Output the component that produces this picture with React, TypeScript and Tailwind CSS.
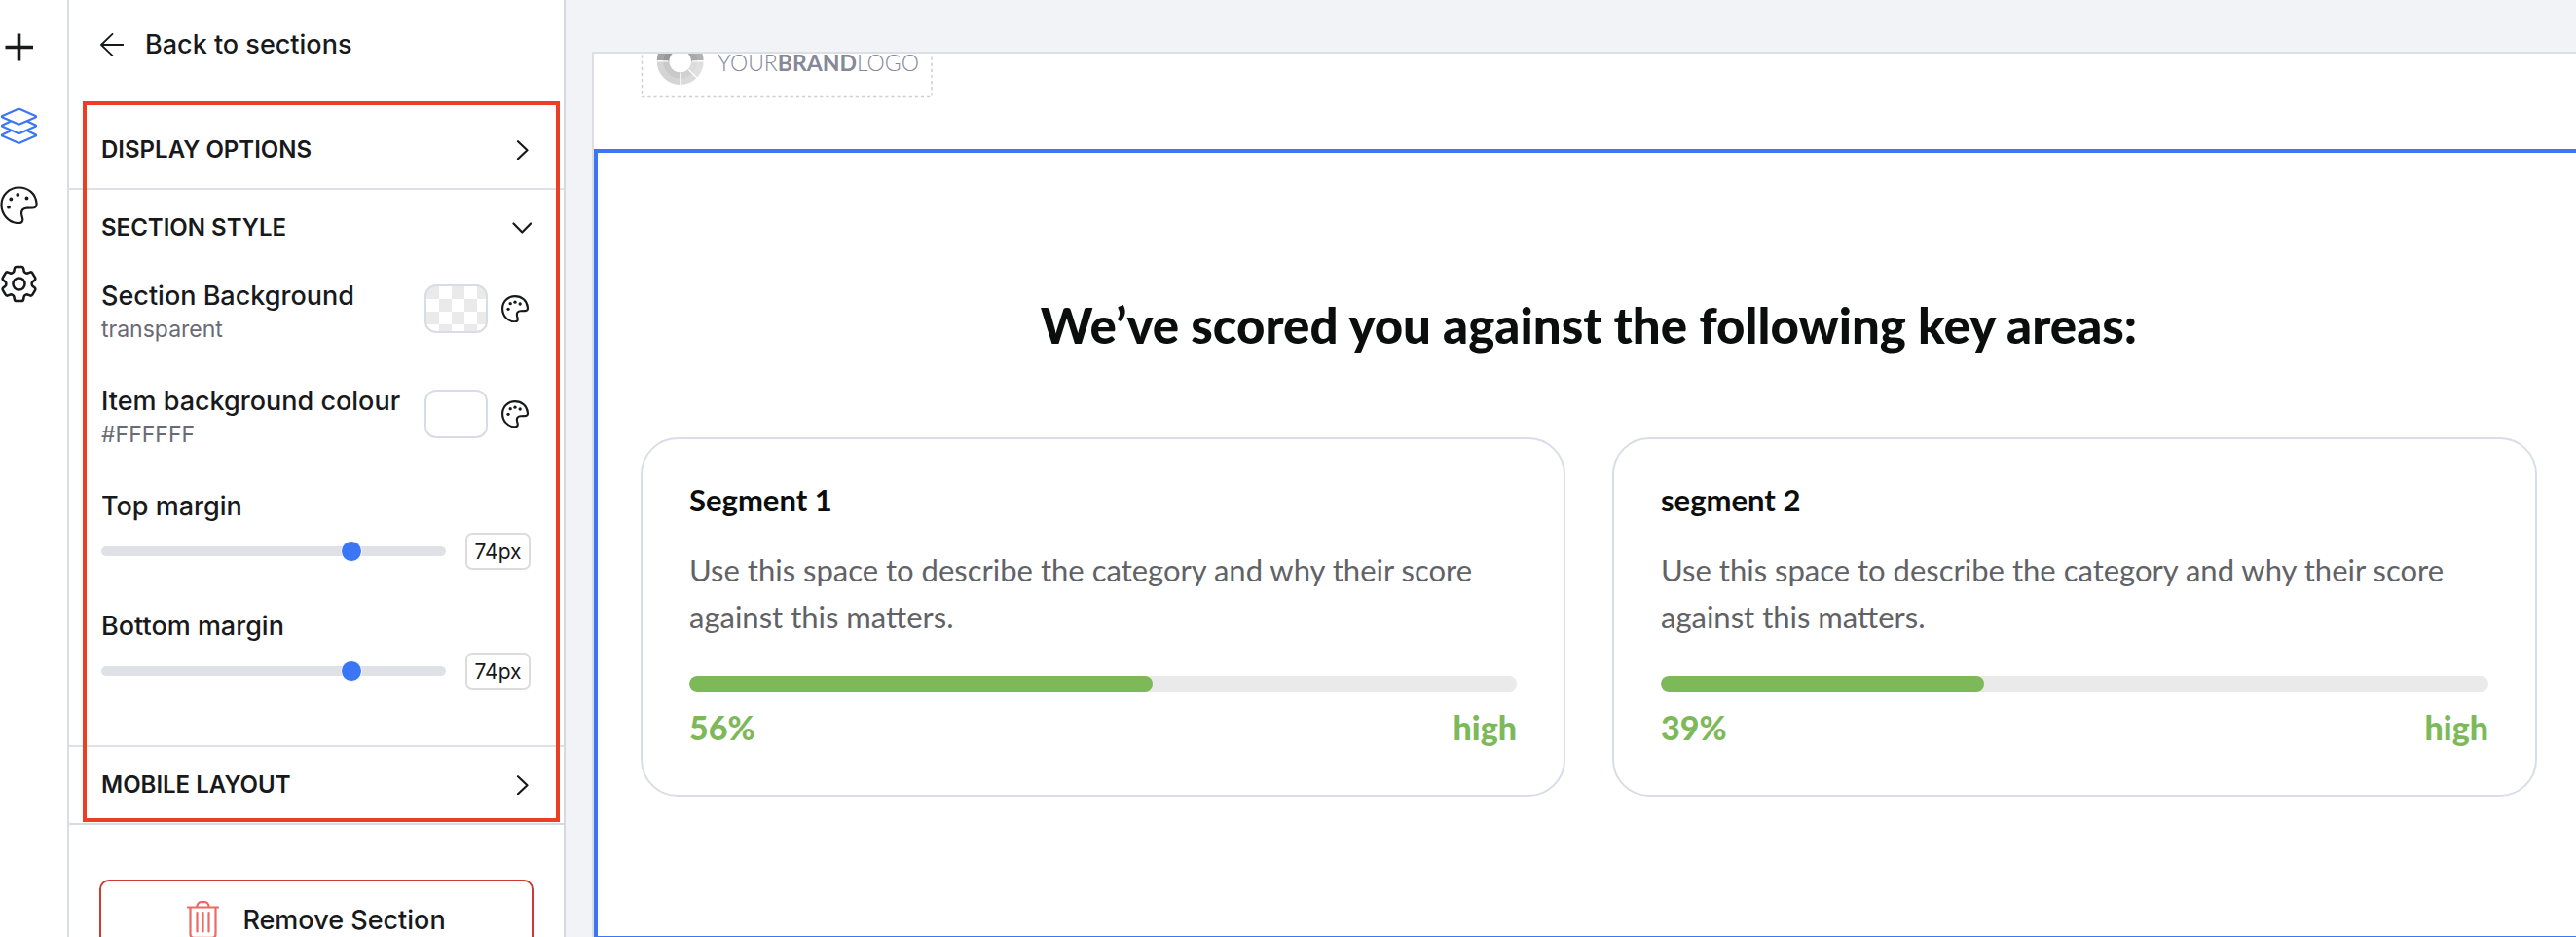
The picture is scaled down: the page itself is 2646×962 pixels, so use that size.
import React, { useState } from "react";

const COG_PATH =
  "M9.594 3.94c.09-.542.56-.94 1.11-.94h2.593c.55 0 1.02.398 1.11.94l.213 1.281c.063.374.313.686.645.87.074.04.147.083.22.127.325.196.72.257 1.075.124l1.217-.456a1.125 1.125 0 0 1 1.37.49l1.296 2.247a1.125 1.125 0 0 1-.26 1.431l-1.003.827c-.293.241-.438.613-.43.992a7.723 7.723 0 0 1 0 .255c-.008.378.137.75.43.991l1.004.827c.424.35.534.955.26 1.43l-1.298 2.247a1.125 1.125 0 0 1-1.369.491l-1.217-.456c-.355-.133-.75-.072-1.076.124a6.47 6.47 0 0 1-.22.128c-.331.183-.581.495-.644.869l-.213 1.281c-.09.543-.56.94-1.11.94h-2.594c-.55 0-1.019-.398-1.11-.94l-.213-1.281c-.062-.374-.312-.686-.644-.87a6.52 6.52 0 0 1-.22-.127c-.325-.196-.72-.257-1.076-.124l-1.217.456a1.125 1.125 0 0 1-1.369-.49l-1.297-2.247a1.125 1.125 0 0 1 .26-1.431l1.004-.827c.292-.24.437-.613.43-.991a6.932 6.932 0 0 1 0-.255c.007-.38-.138-.751-.43-.992l-1.004-.827a1.125 1.125 0 0 1-.26-1.43l1.297-2.247a1.125 1.125 0 0 1 1.37-.491l1.216.456c.356.133.751.072 1.076-.124.072-.044.146-.086.22-.128.332-.183.582-.495.644-.869l.214-1.28Z";

function PlusIcon() {
  return (
    <svg viewBox="0 0 39 39" className="size-[39px]" fill="none" stroke="currentColor" strokeWidth="3.6">
      <path d="M19.5 5.5v28M5.5 19.5h28.5" />
    </svg>
  );
}

function LayersIcon() {
  return (
    <svg viewBox="0 0 39 39" className="size-[39px]" fill="none" stroke="currentColor" strokeWidth="2.2" strokeLinejoin="round" strokeLinecap="round">
      <path d="M18.4 2.1q1.1-.5 2.2 0L36.5 9q1.2.7 0 1.4L20.6 17.3q-1.1.5-2.2 0L2.5 10.4q-1.2-.7 0-1.4z" />
      <path d="M10.5 14.7L2.5 18.4q-1.2.7 0 1.4l15.900 6.900q1.100.5 2.200 0l15.900-6.900q1.200-.7 0-1.400l-8-3.700" />
      <path d="M10.5 24.500L2.500 28.200q-1.200.7 0 1.400l15.900 6.900q1.100.5 2.200 0l15.900-6.900q1.200-.7 0-1.400l-8-3.700" />
    </svg>
  );
}

function PaletteIcon({ small = false }: { small?: boolean }) {
  const dots = small
    ? [[12.8, 12.1], [19.5, 10], [26.7, 12.5], [9.8, 20]]
    : [[11.3, 13.5], [18.3, 9], [27.5, 12.5], [9, 21.7]];
  return (
    <svg viewBox="0 0 39 39" className={small ? "size-[28px]" : "size-[39px]"} fill="none" stroke="currentColor" strokeWidth={small ? 3 : 2.2} strokeLinejoin="round">
      <path d="M19.5 1.5C9.3 1.5 1.5 9.5 1.5 19c0 10.500 7.500 18.500 16.500 19 4 .3 5.800-1.300 5.200-4.500l-.9-3.800c-.9-4.500 1.200-7 5.200-7.100l6.300-.1c2.900-.1 4-2 3.700-5C36.600 8 29.300 1.500 19.500 1.500z" />
      {dots.map(([x, y]) => (
        <circle key={`${x}-${y}`} cx={x} cy={y} r={small ? 2.3 : 1.9} fill="currentColor" stroke="none" />
      ))}
    </svg>
  );
}

function CogIcon() {
  return (
    <svg viewBox="2 2 20 20" className="size-[39px]" fill="none" stroke="currentColor" strokeWidth="1.3" strokeLinejoin="round">
      <path d={COG_PATH} />
      <circle cx="12" cy="12" r="3.1" />
    </svg>
  );
}

function ArrowLeftIcon() {
  return (
    <svg viewBox="0 0 24 24" className="size-[24px]" fill="none" stroke="currentColor" strokeWidth="1.8" strokeLinecap="round" strokeLinejoin="round">
      <path d="M12.5 .9L1 12l11.500 11.100M1 12h22.500" />
    </svg>
  );
}

function Chevron({ open = false }: { open?: boolean }) {
  return (
    <svg viewBox="0 0 20 20" className="size-[20px]" fill="none" stroke="currentColor" strokeWidth="2.2" strokeLinecap="round" strokeLinejoin="round">
      <path d={open ? "M1.5 5.500L10.300 14.500l8.800-9" : "M6 1.200l9.500 9-9.500 9"} />
    </svg>
  );
}

function TrashIcon() {
  return (
    <svg viewBox="0 0 33 39" className="h-[39px] w-[33px]" fill="none" stroke="currentColor" strokeWidth="2.2" strokeLinecap="round">
      <path d="M1 6.500h31M10 6.500c.8-3 2.500-5.300 4.200-5.300h4.600c1.700 0 3.400 2.300 4.200 5.300M3.500 7v27c0 2.500 1 3.800 3.500 3.800h19c2.500 0 3.500-1.300 3.500-3.800V7M10.500 12v19.500M16.500 12v19.500M22.500 12v19.500" />
    </svg>
  );
}

function BrandLogo() {
  return (
    <svg viewBox="0 0 300 48" className="h-[48px] w-[300px] overflow-visible" fill="none">
      <clipPath id="logo-ring">
        <rect width="78" height="48" />
      </clipPath>
      <path d="M1.5 1.500V44.500H299V1.500" stroke="#cfd0d3" strokeWidth="1.5" strokeDasharray="3.2 2.9" />
      <g clipPath="url(#logo-ring)">
        <g strokeWidth="6.5">
          <path d="M20 7a20.700 20.700 0 0 1 20.700-20" stroke="#a3a3a3" />
          <path d="M61.400 7a20.700 20.700 0 0 0-20.700-20" stroke="#b1b1b1" />
          <path d="M20 8a20.700 20.700 0 0 0 20.700 20.700" stroke="#d4d4d4" />
          <path d="M40.700 28.700a20.700 20.700 0 0 0 14.640-6.060" stroke="#dadada" />
          <path d="M55.340 22.640A20.700 20.700 0 0 0 61.400 8" stroke="#e0e0e0" />
          <path d="M26.200 8a14.500 14.500 0 0 1 14.500-14.500" stroke="#989898" />
          <path d="M55.200 8a14.500 14.500 0 0 0-14.500-14.500" stroke="#a9a9a9" />
          <path d="M26.200 8a14.500 14.500 0 0 0 14.500 14.500" stroke="#c9c9c9" />
          <path d="M40.700 22.500a14.500 14.500 0 0 0 10.250-4.250" stroke="#d1d1d1" />
          <path d="M50.950 18.250A14.500 14.500 0 0 0 55.200 8" stroke="#dcdcdc" />
        </g>
        <path d="M15 7.800H28.500M53 7.800H67M41 20V34M49.500 16.800L60 27.300" stroke="#fff" strokeWidth="1.3" />
      </g>
      <text x="79" y="17.5" fontSize="23" fontWeight="300" fill="#858899" className="font-['Lato',sans-serif]">
        YOUR<tspan fontWeight="700">BRAND</tspan>LOGO
      </text>
    </svg>
  );
}

function RailButton({ label, active = false, children }: { label: string; active?: boolean; children: React.ReactNode }) {
  return (
    <button aria-label={label} className={active ? "text-[#3b76f6]" : "text-[#18191b]"}>
      {children}
    </button>
  );
}

function SectionToggle({ title, open = false }: { title: string; open?: boolean }) {
  return (
    <button aria-expanded={open} className="flex w-full items-center justify-between py-[21px] pr-[33px] pl-[33px] text-2xl leading-9 font-semibold">
      {title}
      <Chevron open={open} />
    </button>
  );
}

function ColourRow({ label, value, checker = false }: { label: string; value: string; checker?: boolean }) {
  return (
    <div className="flex items-start justify-between">
      <div>
        <div className="text-[27px] leading-9 font-medium">{label}</div>
        <div className="text-[23px] leading-8 text-[#6a6a74]">{value}</div>
      </div>
      <div className="flex items-center gap-[14px] pt-[6px] pr-[2px]">
        <button
          aria-label={`${label}: ${value}`}
          className={
            checker
              ? "h-[50px] w-[65px] rounded-xl border-2 border-[#d8dde3] bg-[repeating-conic-gradient(#eaeaea_0_25%,#ffffff_0_50%)] bg-[length:26px_26px] bg-[position:-13px_0px]"
              : "h-[50px] w-[65px] rounded-xl border-2 border-[#d8dde3] bg-white"
          }
        />
        <button aria-label={`${label} palette`}>
          <PaletteIcon small />
        </button>
      </div>
    </div>
  );
}

function MarginRow({ id, label }: { id: string; label: string }) {
  const [value, setValue] = useState(74);
  return (
    <div className="flex flex-col gap-[9px]">
      <label htmlFor={id} className="text-[27px] leading-9 font-medium">
        {label}
      </label>
      <div className="flex items-center gap-5">
        <input
          id={id}
          type="range"
          min={0}
          max={100}
          value={value}
          onChange={(e) => setValue(Number(e.target.value))}
          className="h-[10px] min-w-0 flex-1 appearance-none rounded-full bg-[#e0e1e7] [&::-webkit-slider-thumb]:size-[22px] [&::-webkit-slider-thumb]:appearance-none [&::-webkit-slider-thumb]:rounded-full [&::-webkit-slider-thumb]:border [&::-webkit-slider-thumb]:border-white [&::-webkit-slider-thumb]:bg-[#3b76f6]"
        />
        <input
          aria-label={`${label} value`}
          value={`${value}px`}
          onChange={(e) => setValue(parseInt(e.target.value, 10) || 0)}
          className="h-[38px] w-[67px] rounded-[7px] border-2 border-[#dcdcdc] text-center text-[21px] leading-7"
        />
      </div>
    </div>
  );
}

function ScoreCard({ title, score }: { title: string; score: number }) {
  return (
    <article className="flex-1 rounded-[38px] border-2 border-[#d9dee6] px-12 pt-[38px] pb-[45px]">
      <h3 className="text-[31px] leading-[48px] font-bold text-[#0c0d0d]">{title}</h3>
      <p className="mt-6 text-[31px] leading-[48px] text-[#616266]">
        Use this space to describe the category and why their score against this matters.
      </p>
      <div className="mt-[37px] h-4 overflow-hidden rounded-full bg-[#eaeaea]">
        <div className="h-full rounded-full bg-[#7db959]" style={{ width: `${score}%` }} />
      </div>
      <div className="mt-[13px] flex justify-between text-[34px] leading-[48px] font-black text-[#7db959]">
        <span>{score}%</span>
        <span>high</span>
      </div>
    </article>
  );
}

export default function App() {
  return (
    <div className="flex h-screen overflow-hidden bg-[#f1f3f7] font-['Inter',sans-serif] text-[#18191b]">
      <nav className="flex shrink-0 flex-col gap-[42px] border-r-2 border-[#d9dde4] bg-white pt-[29px] pr-[30px]">
        <RailButton label="Add section"><PlusIcon /></RailButton>
        <RailButton label="Sections" active><LayersIcon /></RailButton>
        <RailButton label="Theme"><PaletteIcon /></RailButton>
        <RailButton label="Settings"><CogIcon /></RailButton>
      </nav>

      <aside className="w-[510px] shrink-0 border-r-2 border-[#d5dae1] bg-white">
        <button className="flex items-center gap-[22px] pt-7 pb-10 pl-8 text-[27px] leading-9 font-medium">
          <ArrowLeftIcon />
          Back to sections
        </button>

        <div className="relative">
          <div className="border-b-2 border-[#dde1e7] pt-[11px]">
            <SectionToggle title="DISPLAY OPTIONS" />
          </div>
          <div className="border-b-2 border-[#dde1e7]">
            <SectionToggle title="SECTION STYLE" open />
            <div className="flex flex-col gap-10 pt-[13px] pr-[34px] pb-[57px] pl-[33px]">
              <ColourRow label="Section Background" value="transparent" checker />
              <ColourRow label="Item background colour" value="#FFFFFF" />
              <MarginRow id="top-margin" label="Top margin" />
              <MarginRow id="bottom-margin" label="Bottom margin" />
            </div>
          </div>
          <div className="border-b-2 border-[#d5dae1]">
            <SectionToggle title="MOBILE LAYOUT" />
          </div>
          <div className="pointer-events-none absolute top-0 right-1 bottom-[3px] left-[14px] border-4 border-[#eb3f25]" />
        </div>

        <div className="pt-14 pr-[31px] pl-[31px]">
          <button className="flex w-full items-center justify-center gap-6 rounded-[10px] border-2 border-[#cb3a33] py-[20px] text-[27px] leading-9 font-medium">
            <span className="text-[#ec6a66]"><TrashIcon /></span>
            Remove Section
          </button>
        </div>
      </aside>

      <main className="min-w-0 flex-1 pt-[53px] pl-[27px] font-['Lato',sans-serif]">
        <div className="border-t-2 border-l-2 border-[#dcdfe3] bg-white">
          <header className="h-[98px] pl-12">
            <BrandLogo />
          </header>
          <section className="border-y-4 border-l-4 border-[#3b76f6] pt-[145px] pr-10 pb-[143px] pl-11">
            <h2 className="text-center text-[51px] leading-[64px] font-black text-[#0c0d0d]">
              We’ve scored you against the following key areas:
            </h2>
            <div className="mt-[83px] flex gap-12">
              <ScoreCard title="Segment 1" score={56} />
              <ScoreCard title="segment 2" score={39} />
            </div>
          </section>
        </div>
      </main>
    </div>
  );
}
